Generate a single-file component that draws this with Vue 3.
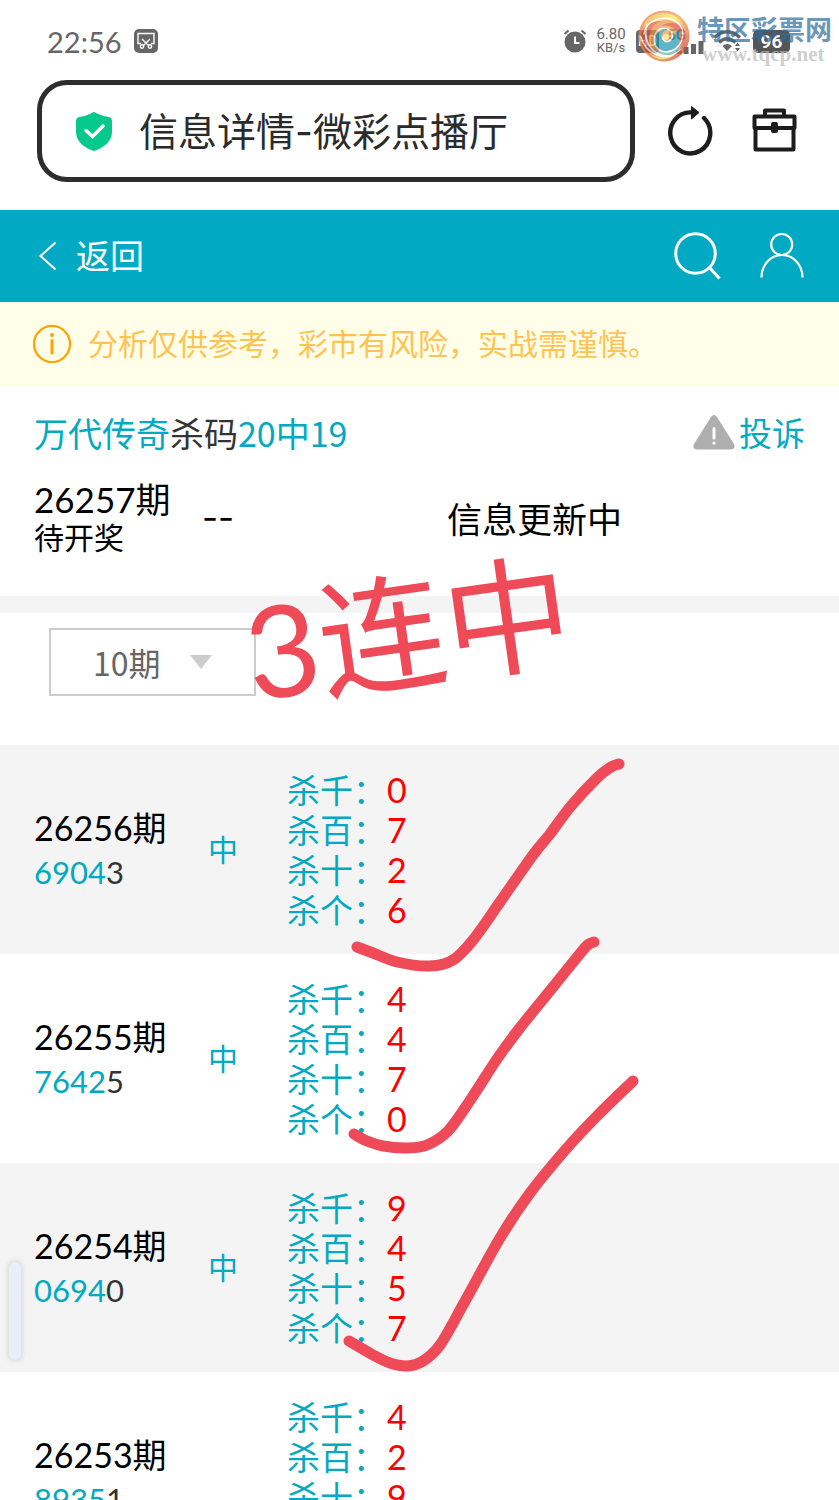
<script setup>
import { ref } from 'vue'

const address = ref('信息详情-微彩点播厅')
const range = ref('10')

const places = ['千', '百', '十', '个']
const records = [
  { issue: '26256', hit: '6904', miss: '3', result: '中', kills: [0, 7, 2, 6] },
  { issue: '26255', hit: '7642', miss: '5', result: '中', kills: [4, 4, 7, 0] },
  { issue: '26254', hit: '0694', miss: '0', result: '中', kills: [9, 4, 5, 7] },
  { issue: '26253', hit: '8935', miss: '1', result: '', kills: [4, 2, 9] }
]

// Hand-drawn strokes, smoothed through their points
const strokes = [
  [[357, 947], [373, 953], [397, 962], [430, 966], [453, 960], [473, 940], [500, 902], [533, 855], [550, 834], [571, 806], [597, 778], [611, 767], [619, 764]],
  [[354, 1134], [367, 1141], [383, 1146], [407, 1148], [427, 1145], [448, 1131], [471, 1099], [497, 1059], [519, 1029], [553, 987], [583, 950], [589, 944], [594, 942]],
  [[349, 1341], [373, 1355], [390, 1363], [407, 1366], [423, 1361], [440, 1345], [464, 1303], [500, 1238], [530, 1193], [567, 1148], [597, 1116], [633, 1081]]
]

function smooth(p) {
  let d = `M${p[0][0]} ${p[0][1]}`
  for (let i = 0; i < p.length - 1; i++) {
    const a = p[i - 1] || p[i]
    const b = p[i]
    const c = p[i + 1]
    const e = p[i + 2] || c
    d += ` C${b[0] + (c[0] - a[0]) / 6} ${b[1] + (c[1] - a[1]) / 6} ${c[0] - (e[0] - b[0]) / 6} ${c[1] - (e[1] - b[1]) / 6} ${c[0]} ${c[1]}`
  }
  return d
}
</script>

<template>
  <div class="page">
    <div class="status">
      <span class="clock">22:56</span>
      <svg class="cut" width="24" height="24" viewBox="0 0 24 24">
        <rect width="24" height="24" rx="5" fill="#666" />
        <g fill="none" stroke="#fff" stroke-width="1.4">
          <path d="M7 14.500H4V4.500H20V14.500H17M8 10L14.500 16.500M16 10L9.500 16.500" />
          <circle cx="8" cy="17.500" r="1.700" />
          <circle cx="16" cy="17.500" r="1.700" />
        </g>
      </svg>
      <div class="signals">
        <svg width="24" height="24" viewBox="0 0 24 24">
          <circle cx="12" cy="13" r="10.500" fill="#666" />
          <path d="M1.500 5L5.500 1.500M22.500 5L18.500 1.500" stroke="#666" stroke-width="2" />
          <path d="M12 7.500V14H16.500" fill="none" stroke="#fff" stroke-width="2" />
        </svg>
        <div class="speed"><span>6.80</span><span>KB/s</span></div>
        <span class="hd">HD</span>
        <div class="cell">
          <span>5G</span>
          <svg width="28" height="13" viewBox="0 0 28 13">
            <path d="M3 13V9M10 13V6M17.500 13V3M25 13V0" stroke="#666" stroke-width="5" />
          </svg>
        </div>
        <svg class="wifi" width="30" height="24" viewBox="0 0 30 24">
          <g fill="none" stroke="#666" stroke-width="3.400">
            <path d="M1.500 8.500Q14 -3 27 8.500" />
            <path d="M6 13.500Q14 6 22.500 13.500" />
          </g>
          <path d="M9.500 17Q14 13 19 17L14 22Z" fill="#666" />
          <path d="M22 17L24.500 13.500L27 17ZM22 19L24.500 22.500L27 19Z" fill="#666" />
        </svg>
        <span class="battery">96</span>
      </div>
      <div class="brand">
        <svg width="52" height="52" viewBox="0 0 52 52">
          <defs>
            <linearGradient id="ring" x1="0" y1="0" x2="1" y2="1">
              <stop offset="0" stop-color="#e0643c" />
              <stop offset="0.500" stop-color="#f2a04a" />
              <stop offset="1" stop-color="#b8201c" />
            </linearGradient>
            <linearGradient id="sun" x1="0" y1="0" x2="1" y2="0.600">
              <stop offset="0" stop-color="#f0904a" />
              <stop offset="0.600" stop-color="#ffee50" />
              <stop offset="1" stop-color="#ee8b45" />
            </linearGradient>
          </defs>
          <circle cx="26" cy="26" r="25.500" fill="url(#ring)" />
          <path d="M10 8C26 -4 46 6 49 24C43 8 26 7 16 14C12 17 9 20 7 26C5 18 6 12 10 8Z" fill="url(#sun)" />
          <path d="M3 25C3 38 9 46 20 50C13 42 9 32 13 20C15 15 19 12 24 11C12 11 5 16 3 25Z" fill="#dd5138" />
          <path d="M46 20C52 32 44 48 28 50C36 46 43 38 41 27C39 18 30 13 22 17C30 10 42 12 46 20Z" fill="#df4c30" />
          <path d="M39 18C45 28 40 41 29 41C20 42 15 34 18 27C20 20 28 17 33 20C26 19 22 24 24 29C27 36 37 31 39 18Z" fill="#1899b4" />
          <path d="M12 35C20 45 34 44 44 34C40 46 24 51 12 35Z" fill="#58b3b0" />
          <path d="M11 43C20 49 31 48 39 42C34 50 20 53 11 43Z" fill="#e9d62c" />
          <g fill="none" stroke="#fff" stroke-width="1.500" stroke-linecap="round">
            <path d="M6 24C8 10 27 3 40 13C51 23 42 42 28 42C15 41 12 25 22 19C32 15 39 27 31 31C27 33 23 29 26 26" />
            <path d="M3 27C7 43 27 54 42 40" />
            <path d="M8 20C6 33 16 47 32 46" />
          </g>
          <circle cx="28" cy="27" r="3" fill="#f4e483" />
        </svg>
        <div class="brand-text">
          <strong>特区彩票网</strong>
          <span>www.tqcp.net</span>
        </div>
      </div>
    </div>

    <div class="browser">
      <label class="address">
        <svg width="36" height="40" viewBox="0 0 36 40">
          <path d="M18 1Q19 1 20 2Q26 5 33 6Q36 7 36 10V21C36 31 27 37 18 40C9 37 0 31 0 21V10Q0 7 3 6Q10 5 16 2Q17 1 18 1Z" fill="#04c88c" />
          <path d="M10 19.500L16.500 25.500L27 15" fill="none" stroke="#fff" stroke-width="3.500" stroke-linecap="round" />
        </svg>
        <input v-model="address" type="text" aria-label="地址" />
      </label>
      <div class="tools">
        <button type="button" aria-label="刷新">
          <svg width="48" height="50" viewBox="0 0 48 50">
            <path d="M38 12A20 20.500 0 1 1 26 6.500" fill="none" stroke="#1d1d1d" stroke-width="4.400" stroke-linecap="round" />
            <path d="M25.500 0.500L33 6.500L25.500 13Z" fill="#1d1d1d" stroke="#1d1d1d" stroke-linejoin="round" />
          </svg>
        </button>
        <button type="button" aria-label="工具箱">
          <svg width="48" height="50" viewBox="0 0 48 50">
            <g fill="none" stroke="#1d1d1d" stroke-width="4" stroke-linejoin="round">
              <rect x="4.500" y="10.500" width="40" height="11.500" />
              <path d="M5.500 22V43.500H43.500V22M15 10V4.500H34V10" />
            </g>
            <rect x="21" y="16" width="7" height="11" rx="2" fill="#1d1d1d" />
          </svg>
        </button>
      </div>
    </div>

    <header class="nav">
      <a href="#back" class="back">
        <svg width="18" height="30" viewBox="0 0 18 30"><path d="M16.500 1.500L1.500 15L16.500 28.500" fill="none" stroke="#fff" stroke-width="2" /></svg>
        <span>返回</span>
      </a>
      <div class="nav-icons">
        <button type="button" aria-label="搜索">
          <svg width="48" height="50" viewBox="0 0 48 50">
            <circle cx="22.500" cy="22.500" r="19.800" fill="none" stroke="#fff" stroke-width="3" />
            <path d="M36.500 36.500L46.500 47.500" stroke="#fff" stroke-width="3.200" />
          </svg>
        </button>
        <button type="button" aria-label="我的">
          <svg width="48" height="50" viewBox="0 0 48 50">
            <g fill="none" stroke="#fff" stroke-width="2.200">
              <circle cx="23.700" cy="13.500" r="10.500" />
              <path d="M3.500 46.500A20.500 22.500 0 0 1 44.500 46.500" />
            </g>
          </svg>
        </button>
      </div>
    </header>

    <main>
      <p class="notice">
        <svg width="38" height="38" viewBox="0 0 38 38">
          <circle cx="19" cy="19" r="18" fill="none" stroke="#ffa200" stroke-width="2.200" />
          <circle cx="19" cy="10" r="2" fill="#ffa200" />
          <path d="M19 15.500V28" stroke="#ffa200" stroke-width="3" stroke-linecap="round" />
        </svg>
        <span>分析仅供参考，彩市有风险，实战需谨慎。</span>
      </p>

      <section class="summary">
        <div class="title-row">
          <h1><a href="#author">万代传奇</a>杀码<em>20中19</em></h1>
          <a href="#report" class="report">
            <svg width="42" height="35" viewBox="0 0 42 35">
              <path d="M18 2Q21 -2 24 2L41 29Q43 34 38 34.500H4Q-1 34 1 29Z" fill="#afafaf" />
              <path d="M21 13.500V23" stroke="#fff" stroke-width="3" stroke-linecap="round" />
              <circle cx="21" cy="28" r="1.600" fill="#fff" />
            </svg>
            投诉
          </a>
        </div>
        <div class="current">
          <div class="current-issue"><span>26257期</span><small>待开奖</small></div>
          <span class="dashes">--</span>
          <span class="updating">信息更新中</span>
        </div>
      </section>

      <div class="filter">
        <div class="picker">
          <select v-model="range" aria-label="期数">
            <option value="10">10期</option>
            <option value="20">20期</option>
            <option value="30">30期</option>
          </select>
          <svg width="22" height="14" viewBox="0 0 22 14"><path d="M0 0H22L11 14Z" fill="#ccc" /></svg>
        </div>
      </div>

      <table class="records">
        <tbody>
          <tr v-for="r in records" :key="r.issue">
            <td class="issue">
              <div class="number">{{ r.issue }}期</div>
              <div class="draw">{{ r.hit }}<b>{{ r.miss }}</b></div>
            </td>
            <td class="result">{{ r.result }}</td>
            <td class="kills">
              <div v-for="(k, i) in r.kills" :key="i"><span>杀{{ places[i] }}：</span><b>{{ k }}</b></div>
            </td>
          </tr>
        </tbody>
      </table>
    </main>

    <div class="handle"></div>
    <div class="scrawl">3连中</div>
    <svg class="strokes" width="839" height="1500" viewBox="0 0 839 1500">
      <path v-for="(s, i) in strokes" :key="i" :d="smooth(s)" />
    </svg>
  </div>
</template>

<style>
body {
  margin: 0;
  background: #fff;
}
</style>

<style scoped>
.page {
  position: relative;
  display: flex;
  flex-direction: column;
  height: 100vh;
  overflow: hidden;
  background: #fff;
  color: #000;
  font-family: Lato, "Noto Sans CJK SC", sans-serif;
}
button {
  padding: 0;
  border: 0;
  background: none;
}
svg {
  display: block;
  flex: none;
}
a {
  color: #02a9c2;
  text-decoration: none;
}
b,
em {
  font-weight: 400;
  font-style: normal;
}

.status {
  position: relative;
  display: flex;
  flex: none;
  align-items: center;
  height: 80px;
  padding: 2px 49px 0 47px;
  box-sizing: border-box;
  color: #666;
}
.clock {
  font-size: 29px;
}
.cut {
  margin-left: 12px;
}
.signals {
  display: flex;
  align-items: center;
  margin-left: auto;
}
.speed {
  display: flex;
  flex-direction: column;
  align-items: center;
  width: 30px;
  margin: 0 10px 0 9px;
  font: 13px/13px Roboto, sans-serif;
}
.speed span:first-child {
  font-size: 15px;
}
.hd {
  width: 23px;
  border-radius: 4px;
  background: #666;
  color: #fff;
  font: 500 14px/23px Roboto, sans-serif;
  text-align: center;
}
.cell {
  display: flex;
  flex-direction: column;
  margin-left: 9px;
  font: 700 14px/12px Roboto, sans-serif;
}
.cell svg {
  margin-left: 8px;
}
.wifi {
  margin-left: 9px;
}
.battery {
  width: 37px;
  margin-left: 10px;
  border-radius: 5px;
  background: #555;
  color: #fff;
  font: 700 19px/23px Roboto, sans-serif;
  text-align: center;
}
.brand {
  position: absolute;
  top: 10px;
  right: 9px;
  display: flex;
  gap: 7px;
  opacity: 0.7;
}
.brand-text {
  display: flex;
  flex-direction: column;
  width: 133px;
  padding-top: 6px;
}
.brand-text strong {
  color: #2c6c9c;
  font-size: 27px;
  line-height: 28px;
  white-space: nowrap;
}
.brand-text span {
  margin-left: 5px;
  color: #bbb;
  font: 700 21px/20px "Liberation Serif", serif;
}

.browser {
  display: flex;
  flex: none;
  align-items: center;
  gap: 31px;
  padding: 0 41px 28px 37px;
}
.address {
  display: flex;
  flex: 1;
  align-items: center;
  gap: 27px;
  min-width: 0;
  height: 102px;
  padding: 0 34px;
  box-sizing: border-box;
  border: 5px solid #2d2d2d;
  border-radius: 30px;
}
.address input {
  flex: 1;
  min-width: 0;
  padding: 0 0 4px;
  border: 0;
  outline: 0;
  background: none;
  color: #2b2b2b;
  font: 39px Inter, "Noto Sans CJK SC", sans-serif;
}
.tools {
  display: flex;
  gap: 36px;
}

.nav {
  display: flex;
  flex: none;
  align-items: center;
  justify-content: space-between;
  height: 92px;
  padding: 0 33px 0 39px;
  background: #02a9c2;
}
.back {
  display: flex;
  align-items: center;
  gap: 19px;
  color: #fff;
  font-size: 34px;
}
.back span,
.notice span {
  padding-bottom: 4px;
}
.nav-icons {
  display: flex;
  gap: 37px;
}

main {
  flex: 1;
  min-height: 0;
  overflow: hidden;
}
.notice {
  display: flex;
  align-items: center;
  gap: 17px;
  height: 84px;
  margin: 0;
  padding: 0 33px;
  background: #fffee8;
  color: #ffc352;
  font-size: 30px;
}
.summary {
  padding: 22px 34px 41px;
  border-bottom: 17px solid #f4f4f4;
}
.title-row {
  display: flex;
  align-items: center;
  justify-content: space-between;
  height: 48px;
}
h1 {
  margin: 0;
  color: #333;
  font-size: 34px;
  font-weight: 400;
  font-family: "Noto Sans CJK SC", sans-serif;
}
h1 em {
  color: #02a9c2;
}
.report {
  display: flex;
  align-items: center;
  gap: 4px;
  font-size: 33px;
}
.current {
  display: grid;
  grid-template-columns: 168px 245px 1fr;
  align-items: center;
  margin-top: 23px;
  font-size: 35px;
}
.current-issue {
  display: flex;
  flex-direction: column;
  line-height: 40px;
}
.current-issue small {
  font-size: 30px;
  line-height: 36px;
}
.dashes {
  font-family: Inter, sans-serif;
}

.filter {
  padding: 15px 49px 49px;
}
.picker {
  position: relative;
  width: 207px;
}
.picker select {
  display: block;
  width: 100%;
  height: 68px;
  padding: 0 0 0 42px;
  border: 2px solid #ccc;
  border-radius: 0;
  appearance: none;
  background: #fff;
  color: #666;
  font: 32px "Noto Sans CJK SC", sans-serif;
}
.picker svg {
  position: absolute;
  top: 27px;
  right: 44px;
  pointer-events: none;
}

.records {
  width: 100%;
  border-collapse: collapse;
  font-size: 34px;
}
.records tr:nth-child(odd) {
  background: #f4f4f4;
}
.records td {
  height: 209px;
  padding: 0;
  box-sizing: border-box;
}
.records .issue {
  width: 208px;
  padding-left: 34px;
  line-height: 44px;
}
.draw {
  color: #02a9c2;
  font-size: 31px;
}
.draw b {
  color: #333;
}
.records .result {
  width: 79px;
  padding-bottom: 4px;
  color: #02a9c2;
  font-size: 30px;
}
.records .kills {
  padding: 25px 0 24px;
  color: #02a9c2;
  line-height: 40px;
  vertical-align: top;
}
.kills div {
  display: flex;
}
.kills span {
  width: 100px;
  font-size: 33px;
  white-space: nowrap;
}
.kills b {
  color: #f00;
}

.handle {
  position: absolute;
  top: 1262px;
  left: 9px;
  width: 12px;
  height: 98px;
  border-radius: 6px;
  background: #ebeef9;
  box-shadow: 0 0 4px 2px #ddd;
}
.scrawl {
  position: absolute;
  top: 537px;
  left: 244px;
  color: #ee4a58;
  font-size: 127px;
  line-height: 186px;
  white-space: nowrap;
  transform: rotate(-8deg);
}
.strokes {
  position: absolute;
  top: 0;
  left: 0;
  pointer-events: none;
}
.strokes path {
  fill: none;
  stroke: #ee4a58;
  stroke-width: 11;
  stroke-linecap: round;
  stroke-linejoin: round;
}
</style>
